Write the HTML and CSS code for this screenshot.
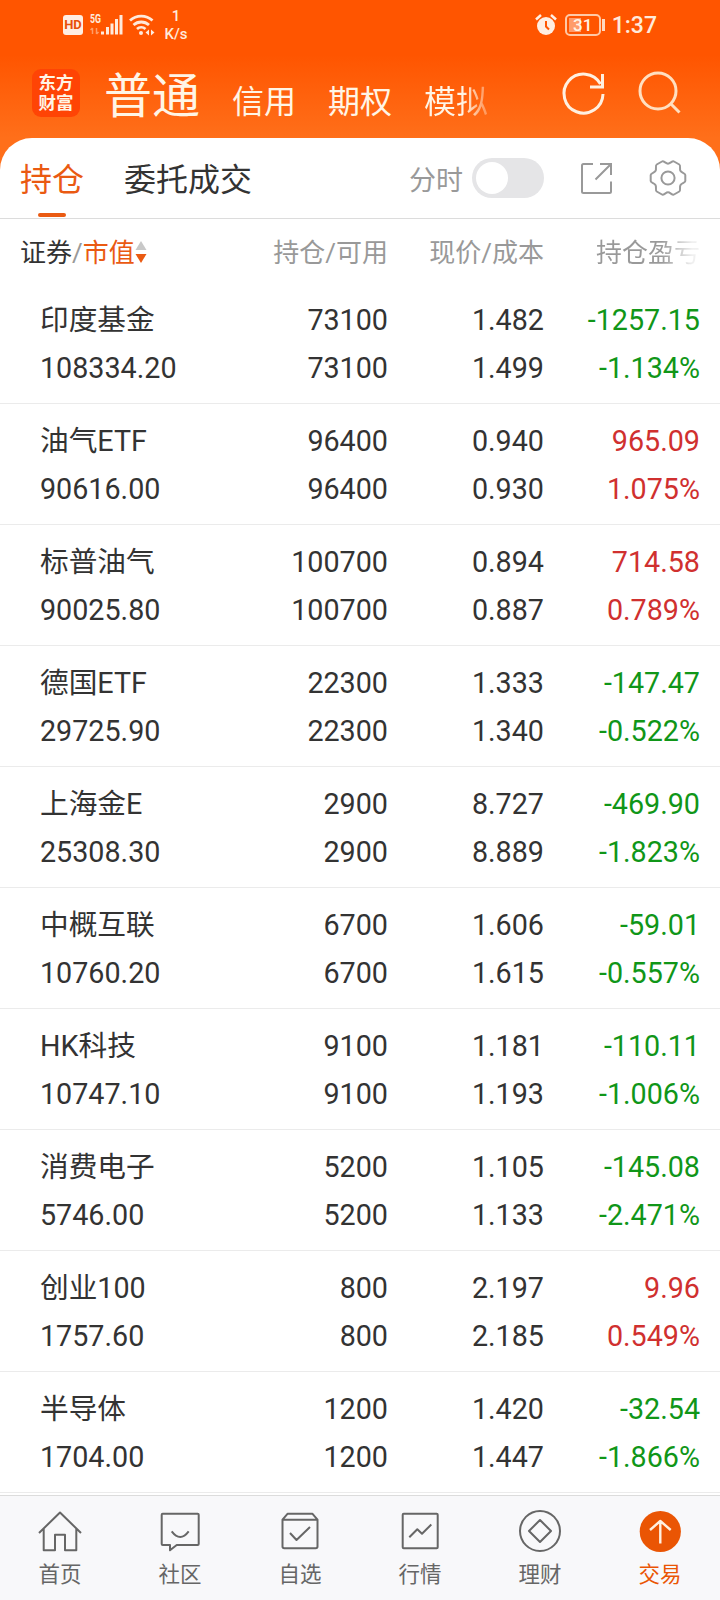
FILE: index.html
```html
<!DOCTYPE html>
<html lang="zh-CN">
<head>
    <meta charset="UTF-8">
    <meta name="viewport" content="width=device-width, initial-scale=1.0">
    <title>持仓</title>
    <link rel="stylesheet" href="styles.css">
</head>
<body>
    <header class="header">
        <div class="status-bar">
            <div class="status-left">
                <span class="hd">HD</span>
                <svg class="signal" width="34" height="28" viewBox="0 -3 34 28">
                    <text x="0" y="8.500" font-size="12" font-weight="700" textLength="11" lengthAdjust="spacingAndGlyphs">5G</text>
                    <path d="M2.500 14v6M2.500 14l-2 2M6.500 20v-6M6.500 20l2-2" stroke="#ff9c66" stroke-width="1.500"/>
                    <path d="M12.500 17.500v3M17.500 13v7.500M22 9.500v11M26.500 5v15.500M31 1v19.500" stroke="#ffeadb" stroke-width="3"/>
                </svg>
                <svg class="wifi" width="27" height="22" viewBox="0 0 27 22">
                    <path d="M1 6.500a16.500 16.500 0 0 1 22.500 0M4.500 11a11.500 11.500 0 0 1 15.500 0M8 15a6.500 6.500 0 0 1 8.500 0" stroke="#ffeadb" stroke-width="2.800"/>
                    <circle cx="12" cy="19" r="2" fill="#ffeadb"/>
                    <path d="M20 15.500v6l-3.500-3zM22 15.500v6l3.500-3z" fill="#ffeadb"/>
                </svg>
                <div class="speed"><span>1</span><span>K/s</span></div>
            </div>
            <div class="status-right">
                <svg width="22" height="22" viewBox="0 0 22 22">
                    <circle cx="11" cy="12" r="9" fill="#ffeee2"/>
                    <path d="M1 5.500L6 1M16 1l5 4.500" stroke="#ffeee2" stroke-width="2.500"/>
                    <path d="M11 7v5.500l3 3" stroke="#ff5500" stroke-width="2"/>
                </svg>
                <span class="battery">31</span>
                <span class="time">1:37</span>
            </div>
        </div>
        <div class="title-bar">
            <div class="logo"><span>东方</span><span>财富</span></div>
            <nav class="accounts">
                <span class="account active">普通</span>
                <span class="account">信用</span>
                <span class="account">期权</span>
                <span class="account fade">模拟</span>
            </nav>
            <svg class="refresh" width="48" height="48" viewBox="0 0 48 48">
                <path d="M43 24A19.500 19.500 0 1 1 40.500 14M42.500 4v13H30"/>
            </svg>
            <svg class="search" width="48" height="48" viewBox="0 0 48 48">
                <circle cx="22" cy="21" r="18"/>
                <path d="M35 34l8.500 8.500"/>
            </svg>
        </div>
    </header>

    <main class="panel">
        <div class="tabs">
            <span class="tab active">持仓</span>
            <span class="tab">委托成交</span>
            <span class="label">分时</span>
            <span class="switch"></span>
            <svg class="share" width="32" height="32" viewBox="0 0 32 32">
                <path d="M13 2H3.500Q2 2 2 3.500V29.500Q2 31 3.500 31H29.500Q31 31 31 29.500V19.500M20 2H31V13M31 2L15.500 17.500"/>
            </svg>
            <svg class="gear" width="40" height="40" viewBox="-20 -20 40 40">
                <path d="M17.300 3.100C17.300 5 13.500 5.200 12.400 7.150S13 12.500 11.300 13.500L6 16.500C4.300 17.500 2.200 14.300 0 14.300S-4.300 17.500-6 16.500L-11.300 13.500C-13 12.500-11.300 9.100-12.400 7.150S-17.300 5-17.300 3.100V-3.100C-17.300-5-13.500-5.200-12.400-7.150S-13-12.500-11.300-13.500L-6-16.500C-4.300-17.500-2.200-14.300 0-14.300S4.300-17.500 6-16.500L11.300-13.500C13-12.500 11.300-9.100 12.400-7.150S17.300-5 17.300-3.100Z"/>
                <circle r="6.600"/>
            </svg>
        </div>

        <div class="columns">
            <span class="sort"><b>证券</b>/<em>市值</em>
                <svg width="12" height="24" viewBox="0 0 12 24">
                    <path d="M6 1l5.500 9H.5z" fill="#c8c8c8"/>
                    <path d="M6 23l5.500-9H.5z" fill="#ea5a12"/>
                </svg>
            </span>
            <span>持仓/可用</span>
            <span>现价/成本</span>
            <span class="fade-head">持仓盈亏</span>
        </div>

        <div class="row">
            <div>印度基金<br>108334.20</div>
            <div>73100<br>73100</div>
            <div>1.482<br>1.499</div>
            <div class="down">-1257.15<br>-1.134%</div>
        </div>
        <div class="row">
            <div>油气ETF<br>90616.00</div>
            <div>96400<br>96400</div>
            <div>0.940<br>0.930</div>
            <div class="up">965.09<br>1.075%</div>
        </div>
        <div class="row">
            <div>标普油气<br>90025.80</div>
            <div>100700<br>100700</div>
            <div>0.894<br>0.887</div>
            <div class="up">714.58<br>0.789%</div>
        </div>
        <div class="row">
            <div>德国ETF<br>29725.90</div>
            <div>22300<br>22300</div>
            <div>1.333<br>1.340</div>
            <div class="down">-147.47<br>-0.522%</div>
        </div>
        <div class="row">
            <div>上海金E<br>25308.30</div>
            <div>2900<br>2900</div>
            <div>8.727<br>8.889</div>
            <div class="down">-469.90<br>-1.823%</div>
        </div>
        <div class="row">
            <div>中概互联<br>10760.20</div>
            <div>6700<br>6700</div>
            <div>1.606<br>1.615</div>
            <div class="down">-59.01<br>-0.557%</div>
        </div>
        <div class="row">
            <div>HK科技<br>10747.10</div>
            <div>9100<br>9100</div>
            <div>1.181<br>1.193</div>
            <div class="down">-110.11<br>-1.006%</div>
        </div>
        <div class="row">
            <div>消费电子<br>5746.00</div>
            <div>5200<br>5200</div>
            <div>1.105<br>1.133</div>
            <div class="down">-145.08<br>-2.471%</div>
        </div>
        <div class="row">
            <div>创业100<br>1757.60</div>
            <div>800<br>800</div>
            <div>2.197<br>2.185</div>
            <div class="up">9.96<br>0.549%</div>
        </div>
        <div class="row">
            <div>半导体<br>1704.00</div>
            <div>1200<br>1200</div>
            <div>1.420<br>1.447</div>
            <div class="down">-32.54<br>-1.866%</div>
        </div>
    </main>

    <nav class="bottom-nav">
        <a class="nav-item">
            <svg width="44" height="44" viewBox="0 0 44 44"><path d="M1 23L22 2.500 43 23M5.700 19V40.300H17V24.700H27V40.300H38.300V19"/></svg>
            首页
        </a>
        <a class="nav-item">
            <svg width="44" height="44" viewBox="0 0 44 44"><path d="M4.700 3.700H39.700Q40.700 3.700 40.700 4.700V34Q40.700 35 39.700 35H18.700L12 40.300V35H4.700Q3.700 35 3.700 34V4.700Q3.700 3.700 4.700 3.700ZM13.700 21.300Q22.200 32.500 30.700 21.300"/></svg>
            社区
        </a>
        <a class="nav-item">
            <svg width="44" height="44" viewBox="0 0 44 44"><path d="M4.500 9.700L9.700 3.700H34.300L39.500 9.700V36.500Q39.500 38.300 37.700 38.300H6.300Q4.500 38.300 4.500 36.500ZM4.500 9.700H39.500M12 23L18.500 30 32 17"/></svg>
            自选
        </a>
        <a class="nav-item">
            <svg width="44" height="44" viewBox="0 0 44 44"><rect x="4.700" y="3.700" width="35" height="34.600" rx="1"/><path d="M11.300 27.300L19.300 19.300 24 23.700 33.300 14.500"/></svg>
            行情
        </a>
        <a class="nav-item">
            <svg width="44" height="44" viewBox="0 0 44 44"><circle cx="22" cy="21" r="20"/><path d="M22 10L33 21 22 32 11 21Z"/></svg>
            理财
        </a>
        <a class="nav-item active">
            <svg width="44" height="44" viewBox="0 0 44 44"><circle class="disc" cx="22.300" cy="21.500" r="20.600"/><path d="M22.300 33.500V11M12 20L22.300 11 32.700 20"/></svg>
            交易
        </a>
    </nav>
</body>
</html>
```
FILE: styles.css
```css
* { box-sizing: border-box; }
body {
    margin: 0;
    width: 720px;
    height: 1600px;
    overflow: hidden;
    display: flex;
    flex-direction: column;
    background: #fff;
    color: #333;
    font-family: Roboto, "Noto Sans CJK SC", sans-serif;
}
svg { display: block; flex: none; fill: none; }

.header {
    height: 170px;
    flex: none;
    background: linear-gradient(#ff5500 55px, #ff6f1a 138px);
    color: #fff5e6;
}
.status-bar {
    height: 48px;
    padding: 1px 63px 0 63px;
    display: flex;
    justify-content: space-between;
}
.status-left, .status-right { display: flex; align-items: center; }
.hd {
    width: 20px;
    height: 20px;
    margin-right: 7px;
    border-radius: 3px;
    background: #ffeee2;
    color: #e8500a;
    font-size: 13px;
    font-weight: 700;
    line-height: 20px;
    text-align: center;
}
.signal text { fill: #ffeadb; }
.wifi { margin-left: 5px; }
.speed {
    width: 22px;
    margin-left: 9px;
    display: flex;
    flex-direction: column;
    align-items: center;
    font-size: 15px;
    font-weight: 500;
    line-height: 18px;
    color: #ffeadb;
}
.battery {
    position: relative;
    width: 36px;
    height: 22px;
    margin: 0 11px 0 8px;
    border: 2px solid #ffc9a6;
    border-radius: 5px;
    background: linear-gradient(90deg, #ff9c6a 12px, transparent 12px) 2px 2px / 26px 14px no-repeat;
    font-size: 17px;
    font-weight: 500;
    line-height: 18px;
    text-align: center;
}
.battery::after {
    content: "";
    position: absolute;
    right: -6px;
    top: 3px;
    width: 3px;
    height: 12px;
    background: #ffd9c0;
}
.time { padding-top: 1px; font-size: 23px; font-weight: 500; color: #ffeadb; }

.title-bar { height: 90px; padding-left: 32px; display: flex; }
.logo {
    width: 48px;
    height: 48px;
    margin-top: 21px;
    padding-top: 4px;
    border-radius: 9px;
    background: #ff4405;
    display: flex;
    flex-direction: column;
    align-items: center;
    font-size: 17.5px;
    font-weight: 700;
    line-height: 20px;
}
.accounts {
    width: 455px;
    padding: 4px 0 0 24px;
    display: flex;
    align-items: baseline;
    line-height: 90px;
}
.account { margin-left: 32px; font-size: 32px; }
.account.active { margin-left: 0; font-size: 48px; }
.account.fade {
    background: linear-gradient(90deg, #fff5e6 60%, rgba(255, 245, 230, .3));
    -webkit-background-clip: text;
    background-clip: text;
    color: transparent;
}
.refresh, .search { stroke: #fff0e0; stroke-width: 3; margin-top: 22px; }
.refresh { margin-left: 25px; }
.search { margin-left: 28px; stroke: #ffdfc0; }

.panel {
    flex: none;
    height: 1357px;
    margin-top: -32px;
    border-radius: 32px 32px 0 0;
    background: #fff;
}
.tabs {
    height: 81px;
    padding-left: 20px;
    display: flex;
    align-items: center;
    border-bottom: 1px solid #dcdcdc;
}
.tab { position: relative; height: 80px; margin-right: 40px; font-size: 32px; line-height: 84px; }
.tab.active { color: #ea5a12; }
.tab.active::after {
    content: "";
    position: absolute;
    left: 18px;
    bottom: 1px;
    width: 28px;
    height: 4px;
    border-radius: 2px;
    background: #ea5a12;
}
.label { margin-left: auto; font-size: 27px; color: #999; }
.switch {
    width: 72px;
    height: 40px;
    margin: 0 36px 0 9px;
    padding: 4px;
    border-radius: 20px;
    background: #e5e5e7;
}
.switch::before {
    content: "";
    display: block;
    width: 32px;
    height: 32px;
    border-radius: 50%;
    background: #fff;
}
.share, .gear { stroke: #999; stroke-width: 2; }
.gear { margin: 0 32px 0 36px; }

.columns, .row {
    display: grid;
    grid-template-columns: 232px 156px 156px 156px;
    text-align: right;
}
.columns { height: 64px; font-size: 26px; line-height: 68px; color: #999; }
.sort { display: flex; align-items: center; padding-left: 20px; }
.sort b { font-weight: 400; color: #333; }
.sort em { font-style: normal; color: #ea5a12; }
.sort svg { margin-bottom: 2px; }
.fade-head {
    background: linear-gradient(90deg, #999 75%, rgba(153, 153, 153, .15) 95%);
    -webkit-background-clip: text;
    background-clip: text;
    color: transparent;
}
.row {
    height: 121px;
    padding-top: 13px;
    border-bottom: 1px solid #ebebeb;
    font-size: 28.7px;
    line-height: 48px;
}
.row div:first-child { padding-left: 40px; text-align: left; }
.up { color: #d0302f; }
.down { color: #109618; }

.bottom-nav {
    flex: 1;
    display: flex;
    border-top: 1px solid #dcdcdc;
    background: #f8f8fa;
}
.nav-item {
    flex: 1;
    padding-top: 14px;
    display: flex;
    flex-direction: column;
    align-items: center;
    font-size: 21.5px;
    line-height: 42px;
    color: #666;
}
.nav-item svg { stroke: #666; stroke-width: 2; stroke-linejoin: round; }
.nav-item.active { color: #ea5504; }
.nav-item.active svg { stroke: #fff0e0; stroke-width: 2.4; }
.nav-item .disc { fill: #ea5504; stroke: none; }
```
